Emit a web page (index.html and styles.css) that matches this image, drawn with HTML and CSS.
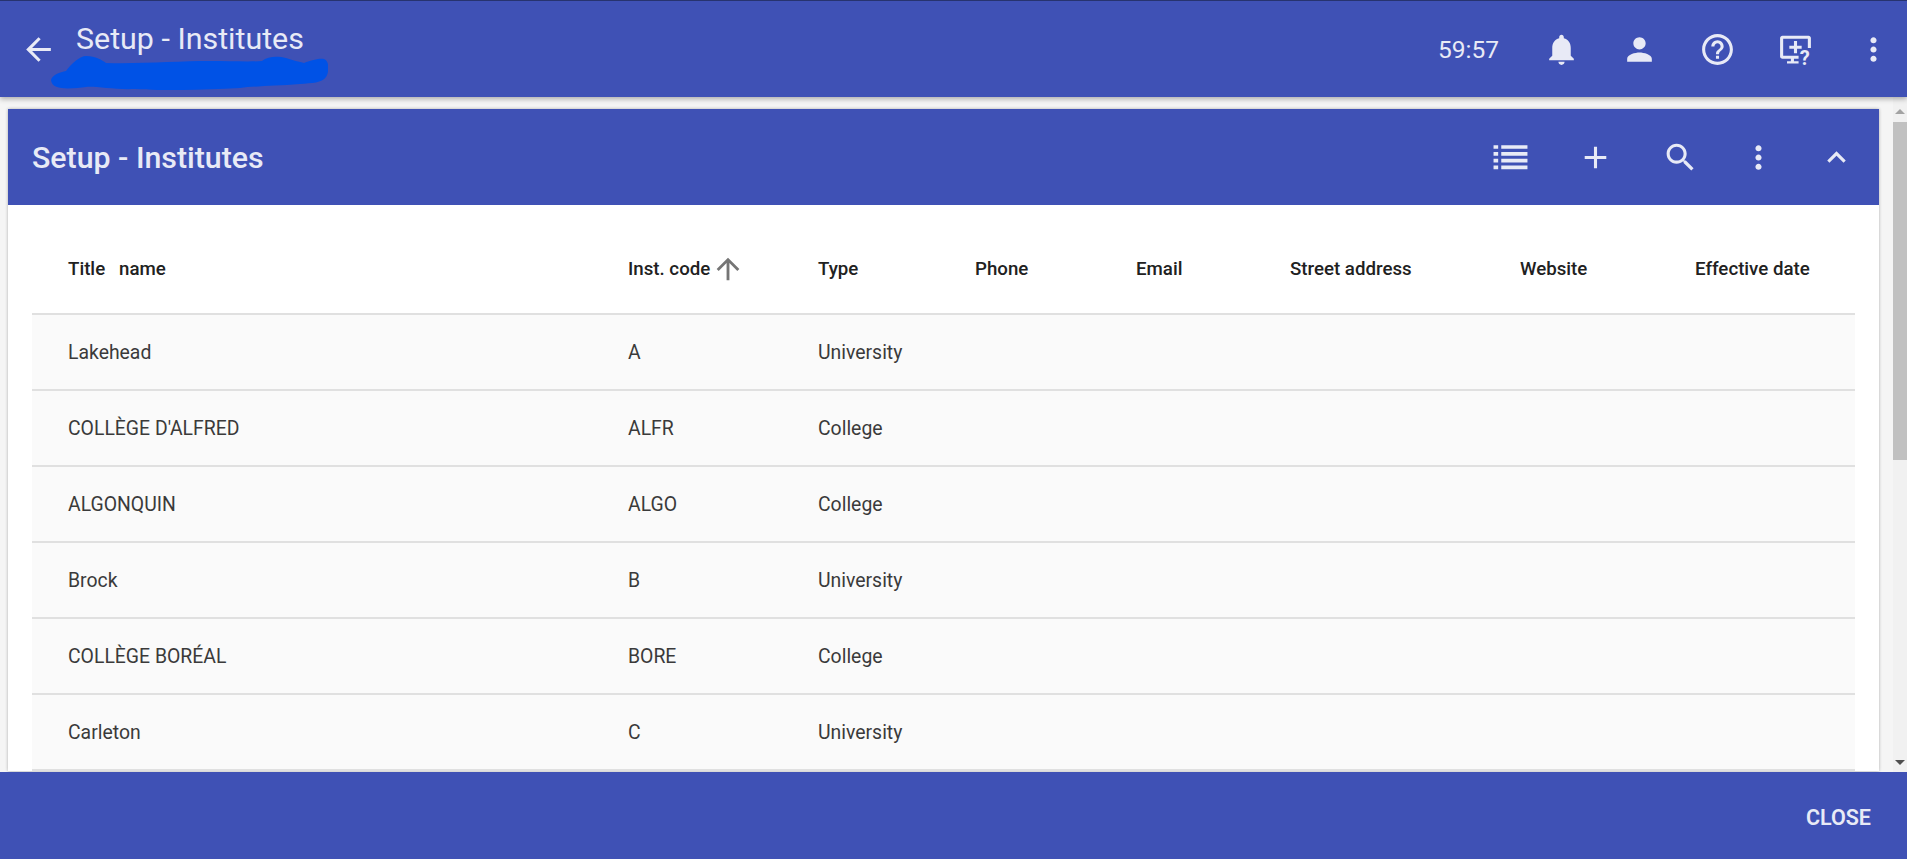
FILE: index.html
```html
<!DOCTYPE html>
<html lang="en">
<head>
<meta charset="utf-8">
<title>Setup - Institutes</title>
<link rel="stylesheet" href="styles.css">
</head>
<body>
<header class="appbar">
  <button class="back" aria-label="Back"><svg class="icon" viewBox="0 0 24 24"><path d="M20 11H7.83l5.59-5.59L12 4l-8 8 8 8 1.41-1.41L7.83 13H20v-2z"/></svg></button>
  <div class="app-title">
    <h1>Setup - Institutes</h1>
    <svg class="scribble" viewBox="0 0 278 35"><path d="M1 25C2 20 10 17 16 16C22 8 30 1 36 1C46 1 52 5 56 8C90 9 130 6 160 6C180 6 200 7 212 6C218 1 228 1 236 3C242 5 250 7 254 8C262 5 270 3 274 4C280 6 279 18 276 22C272 28 262 28 250 29C225 31 205 31 190 33C150 35 110 36 85 34C65 35 45 31 36 32C25 33 2 37 1 25Z"/></svg>
  </div>
  <div class="app-actions">
    <span class="timer">59:57</span>
    <div class="icons">
      <svg class="icon" viewBox="0 0 24 24"><path d="M12 22c1.100 0 2-.9 2-2h-4c0 1.100.89 2 2 2zm6-6v-5c0-3.070-1.640-5.640-4.500-6.320V4c0-.83-.67-1.500-1.500-1.500s-1.500.67-1.500 1.500v.68C7.630 5.360 6 7.920 6 11v5l-2 2v1h16v-1l-2-2z"/></svg>
      <svg class="icon" viewBox="0 0 24 24"><path d="M12 12c2.210 0 4-1.790 4-4s-1.790-4-4-4-4 1.790-4 4 1.790 4 4 4zm0 2c-2.670 0-8 1.340-8 4v2h16v-2c0-2.660-5.330-4-8-4z"/></svg>
      <svg class="icon" viewBox="0 0 24 24"><path d="M11 18h2v-2h-2v2zm1-16C6.480 2 2 6.480 2 12s4.480 10 10 10 10-4.480 10-10S17.520 2 12 2zm0 18c-4.410 0-8-3.590-8-8s3.590-8 8-8 8 3.590 8 8-3.590 8-8 8zm0-14c-2.210 0-4 1.790-4 4h2c0-1.100.9-2 2-2s2 .9 2 2c0 2-3 1.750-3 5h2c0-2.250 3-2.500 3-5 0-2.210-1.790-4-4-4z"/></svg>
      <svg class="icon" viewBox="0 0 24 24"><path d="M3.500 3h17c.8 0 1.500.7 1.500 1.500V11h-2V5H4v11h10v2h-3v1.600h3V21H6.500v-1.400H9V18H3.500C2.700 18 2 17.300 2 16.500v-12C2 3.700 2.700 3 3.500 3zM11 6.500h2V9.500h3v2h-3v3h-2v-3H8v-2h3z"/><text class="q" x="14.800" y="21.800">?</text></svg>
      <svg class="icon" viewBox="0 0 24 24"><path d="M12 8c1.100 0 2-.9 2-2s-.9-2-2-2-2 .9-2 2 .9 2 2 2zm0 2c-1.100 0-2 .9-2 2s.9 2 2 2 2-.9 2-2-.9-2-2-2zm0 6c-1.100 0-2 .9-2 2s.9 2 2 2 2-.9 2-2-.9-2-2-2z"/></svg>
    </div>
  </div>
</header>

<main class="main">
  <div class="content">
    <section class="card">
      <div class="card-head">
        <h2>Setup - Institutes</h2>
        <div class="card-icons">
          <svg class="icon wide" viewBox="0 0 24 24"><path d="M1 4h3v2.400H1zM6 4h17v2.400H6zM1 8.400h3v2.400H1zM6 8.400h17v2.400H6zM1 12.800h3v2.400H1zM6 12.800h17v2.400H6zM1 17.200h3v2.400H1zM6 17.200h17v2.400H6z"/></svg>
          <svg class="icon wide" viewBox="0 0 24 24"><path d="M19 13h-6v6h-2v-6H5v-2h6V5h2v6h6v2z"/></svg>
          <svg class="icon" viewBox="0 0 24 24"><path d="M15.500 14h-.79l-.28-.27C15.410 12.590 16 11.110 16 9.500 16 5.910 13.090 3 9.500 3S3 5.910 3 9.500 5.910 16 9.500 16c1.610 0 3.090-.59 4.230-1.570l.27.280v.79l5 4.990L20.490 19l-4.990-5zm-6 0C7.010 14 5 11.990 5 9.500S7.010 5 9.500 5 14 7.010 14 9.500 11.990 14 9.500 14z"/></svg>
          <svg class="icon" viewBox="0 0 24 24"><path d="M12 8c1.100 0 2-.9 2-2s-.9-2-2-2-2 .9-2 2 .9 2 2 2zm0 2c-1.100 0-2 .9-2 2s.9 2 2 2 2-.9 2-2-.9-2-2-2zm0 6c-1.100 0-2 .9-2 2s.9 2 2 2 2-.9 2-2-.9-2-2-2z"/></svg>
          <svg class="icon" viewBox="0 0 24 24"><path d="M12 8l-6 6 1.410 1.410L12 10.830l4.590 4.580L18 14z"/></svg>
        </div>
      </div>
      <div class="card-body">
        <table class="grid">
          <colgroup>
            <col class="c-title"><col class="c-code"><col class="c-type"><col class="c-phone"><col class="c-email"><col class="c-street"><col class="c-web"><col class="c-date">
          </colgroup>
          <thead>
            <tr>
              <th>Title&nbsp;&nbsp; name</th>
              <th><span class="sorted">Inst. code <svg class="sort" viewBox="0 0 24 24"><path d="M4 12l1.410 1.410L11 7.830V20h2V7.830l5.580 5.590L20 12l-8-8-8 8z"/></svg></span></th>
              <th>Type</th>
              <th>Phone</th>
              <th>Email</th>
              <th>Street address</th>
              <th>Website</th>
              <th>Effective date</th>
            </tr>
          </thead>
          <tbody>
            <tr><td>Lakehead</td><td>A</td><td>University</td><td></td><td></td><td></td><td></td><td></td></tr>
            <tr><td>COLLÈGE D'ALFRED</td><td>ALFR</td><td>College</td><td></td><td></td><td></td><td></td><td></td></tr>
            <tr><td>ALGONQUIN</td><td>ALGO</td><td>College</td><td></td><td></td><td></td><td></td><td></td></tr>
            <tr><td>Brock</td><td>B</td><td>University</td><td></td><td></td><td></td><td></td><td></td></tr>
            <tr><td>COLLÈGE BORÉAL</td><td>BORE</td><td>College</td><td></td><td></td><td></td><td></td><td></td></tr>
            <tr><td>Carleton</td><td>C</td><td>University</td><td></td><td></td><td></td><td></td><td></td></tr>
          </tbody>
        </table>
      </div>
    </section>
  </div>
  <div class="scrollbar">
    <span class="arrow-up"></span>
    <span class="thumb"></span>
    <span class="arrow-down"></span>
  </div>
</main>

<footer class="footer">
  <button class="close">CLOSE</button>
</footer>
</body>
</html>
```

FILE: styles.css
```css
* { box-sizing: border-box; }
html, body { height: 100%; }
body {
  margin: 0;
  height: 859px;
  overflow: hidden;
  display: flex;
  flex-direction: column;
  background: #f5f5f5;
  font-family: Roboto, "Liberation Sans", sans-serif;
  color: #333;
}
h1, h2 { margin: 0; }
button { background: none; border: 0; padding: 0; color: inherit; font-family: inherit; }

.icon { width: 37px; height: 37px; fill: #e8eaf6; display: block; flex: none; }

.appbar {
  height: 97px;
  flex: none;
  display: flex;
  align-items: center;
  background: #3f51b5;
  border-top: 1px solid #27336f;
  color: #e8eaf6;
  box-shadow: 0 2px 5px rgba(0,0,0,.3);
  position: relative;
  z-index: 2;
}
.back { margin-left: 20px; margin-right: 19px; }
.app-title { position: relative; flex: 1; align-self: stretch; }
.app-title h1 { font-size: 30.400px; font-weight: 400; line-height: 34px; margin-top: 21px; }
.scribble { position: absolute; left: -26px; top: 54px; width: 278px; height: 35px; fill: #0052e6; }
.app-actions { display: flex; align-items: center; }
.timer { font-size: 24.500px; margin-right: 44px; }
.icons { display: flex; gap: 41px; margin-right: 15px; }
.q { font: 700 13px Roboto, sans-serif; fill: #e8eaf6; }

.main { flex: 1; min-height: 0; display: flex; overflow: hidden; }
.content { flex: 1; min-width: 0; padding: 12px 14px 0 8px; overflow: hidden; }
.card { background: #fff; box-shadow: 0 0 3px rgba(0,0,0,.3); }
.card-head {
  height: 96px;
  display: flex;
  align-items: center;
  justify-content: space-between;
  padding: 0 24px;
  background: #3f51b5;
  color: #e8eaf6;
}
.card-head h2 { font-size: 30.300px; font-weight: 500; }
.card-icons { display: flex; align-items: center; gap: 41px; }
.card-icons .wide { margin-right: 7px; }
.card-body { padding: 0 24px; }

.grid { width: 100%; table-layout: fixed; border-collapse: collapse; font-size: 19.400px; }
.c-title { width: 560px; }
.c-code { width: 190px; }
.c-type { width: 157px; }
.c-phone { width: 161px; }
.c-email { width: 154px; }
.c-street { width: 230px; }
.c-web { width: 175px; }
.c-date { width: 196px; }
.grid th {
  height: 109px;
  padding: 20px 0 0 36px;
  font-weight: 500;
  font-size: 18.700px;
  text-align: left;
  color: #212121;
  white-space: nowrap;
  border-bottom: 2px solid #e0e0e0;
}
.grid td {
  height: 76px;
  padding: 1px 0 0 36px;
  background: #fafafa;
  border-bottom: 2px solid #e0e0e0;
  white-space: nowrap;
  color: #3a3a3a;
}
.sorted { display: inline-flex; align-items: center; gap: 1px; }
.sort { width: 34px; height: 34px; fill: #757575; }

.scrollbar {
  width: 14px;
  flex: none;
  display: flex;
  flex-direction: column;
  align-items: center;
  background: #f1f1f1;
  padding-top: 12px;
}
.arrow-up { width: 0; height: 0; border: 5px solid transparent; border-top: 0; border-bottom: 5px solid #a3a3a3; }
.thumb { width: 100%; height: 338px; margin-top: 8px; background: #c1c1c1; }
.arrow-down { width: 0; height: 0; margin-top: auto; margin-bottom: 7px; border: 5px solid transparent; border-bottom: 0; border-top: 5px solid #505050; }

.footer {
  height: 87px;
  flex: none;
  display: flex;
  align-items: center;
  justify-content: flex-end;
  padding: 3px 36px 0 0;
  background: #3f51b5;
  position: relative;
  z-index: 2;
}
.close { font-size: 21.500px; font-weight: 600; color: #e8eaf6; }
```
